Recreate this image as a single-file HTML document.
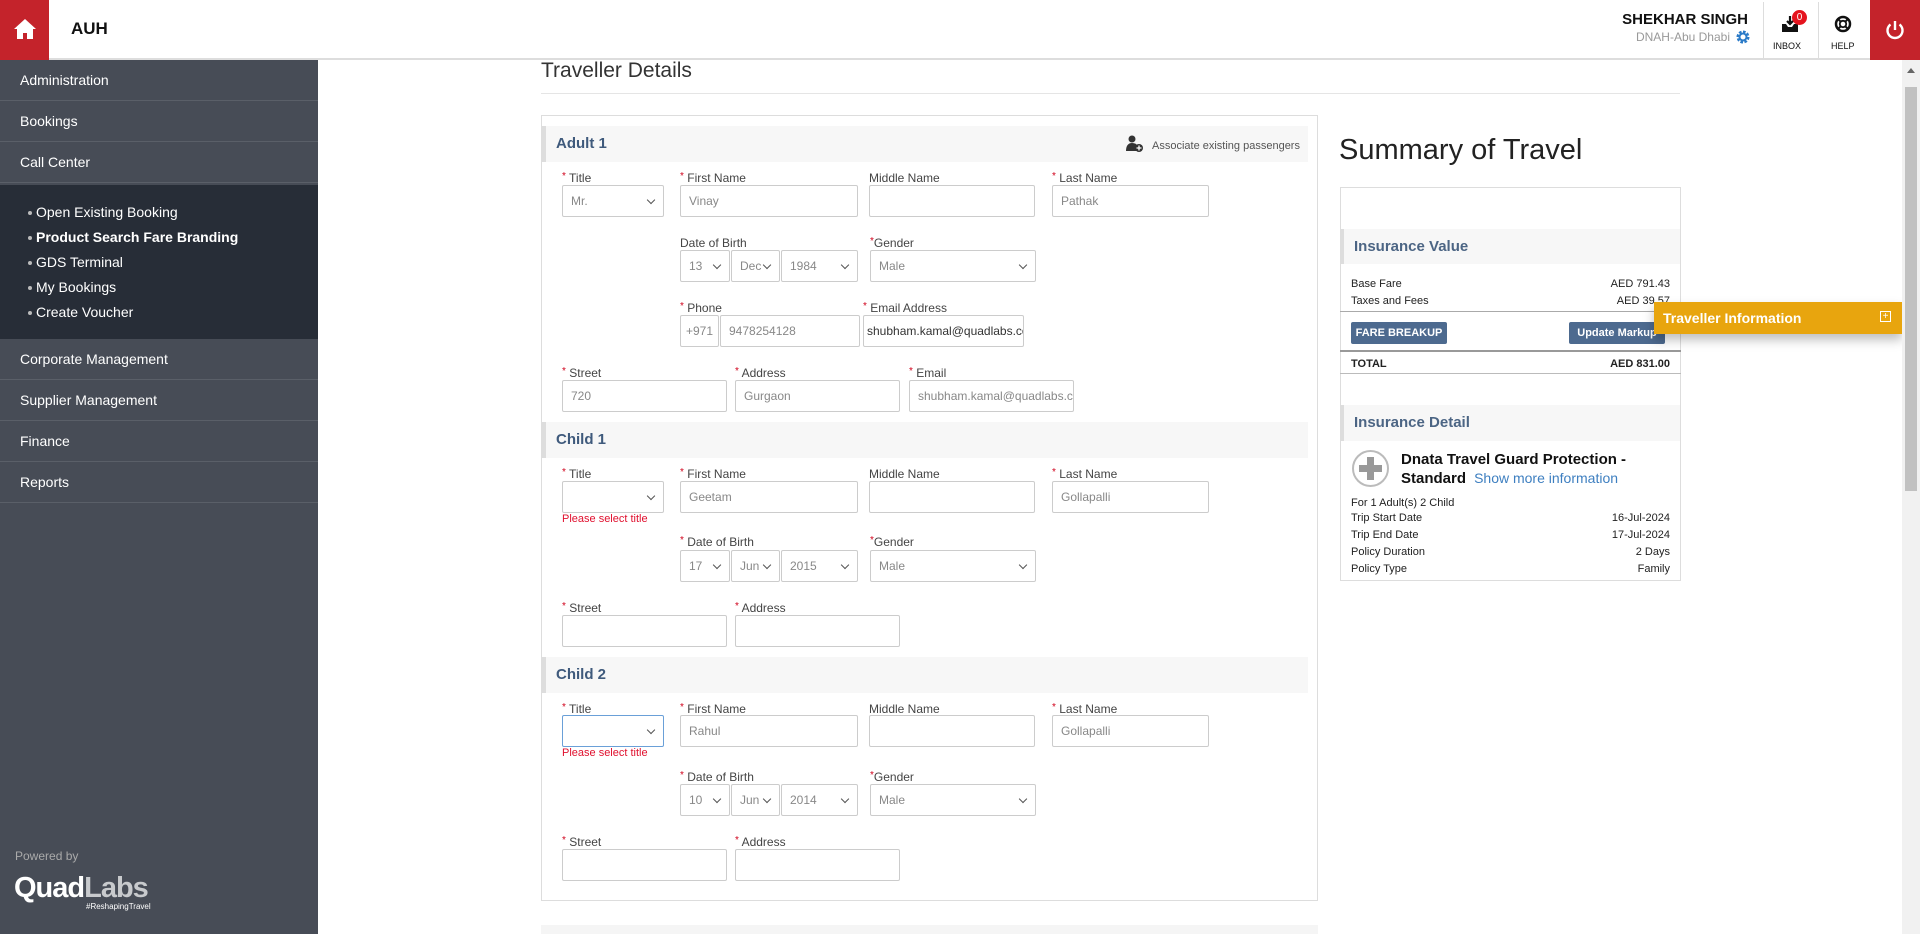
<!DOCTYPE html>
<html><head><meta charset="utf-8"><style>
*{box-sizing:border-box;margin:0;padding:0}
body{width:1920px;height:934px;overflow:hidden;font-family:"Liberation Sans",Arial,sans-serif;background:#fff;position:relative;color:#333}
.a{position:absolute}
.hdr{left:0;top:0;width:1920px;height:60px;background:#fff;border-bottom:2px solid #ddd}
.side{left:0;top:60px;width:318px;height:874px;background:#474c56}
.mi{position:absolute;left:0;width:318px;height:41px;border-bottom:1px solid #5a5f68;color:#fff;font-size:14px;line-height:41px;padding-left:20px}
.sub{position:absolute;left:0;top:125px;width:318px;height:154px;background:#272d37}
.si{position:absolute;left:24px;color:#fff;font-size:14px}
.si:before{content:"";position:absolute;left:-8px;top:7px;width:4px;height:4px;border-radius:2px;background:#bbb}
.lbl{position:absolute;font-size:12px;color:#444}
.lbl b{color:#d0021b;font-weight:normal;font-size:10px;vertical-align:top}
.in{position:absolute;height:32px;border:1px solid #ccc;border-radius:2px;background:#fff;font-size:12px;color:#888;line-height:30px;padding-left:8px;white-space:nowrap;overflow:hidden}
.sel:after{content:"";position:absolute;right:9px;top:11px;width:5px;height:5px;border-right:1.5px solid #555;border-bottom:1.5px solid #555;transform:rotate(45deg)}
.sec{position:absolute;left:542px;width:766px;height:36px;background:#f7f7f7;border-left:4px solid #ddd;font-size:15px;color:#3f5a7c;font-weight:bold;line-height:36px;padding-left:10px}
.err{position:absolute;color:#e0102e;font-size:11px}
.row{position:absolute;left:1351px;width:319px;font-size:11px;color:#222}
.row span{float:right}
.btn{position:absolute;top:322px;height:22px;background:#4d6a8f;color:#fff;font-size:11px;font-weight:bold;line-height:22px;text-align:center;border-radius:2px}
</style></head><body>
<div class="a hdr"></div>
<div class="a" style="left:0;top:0;width:49px;height:60px;background:#c4232b"></div>
<svg class="a" style="left:13px;top:18px" width="24" height="22" viewBox="0 0 24 22"><path d="M12 1L1 11h3v10h6v-6h4v6h6V11h3z" fill="#fff"/></svg>
<div class="a" style="left:71px;top:19px;font-size:17px;font-weight:bold;color:#111">AUH</div>
<div class="a" style="right:172px;top:11px;font-size:15px;font-weight:bold;color:#111">SHEKHAR SINGH</div>
<div class="a" style="right:190px;top:30px;font-size:12px;color:#999">DNAH-Abu Dhabi</div>
<svg class="a" style="left:1736px;top:30px" width="14" height="14" viewBox="0 0 14 14"><circle cx="7" cy="7" r="5" fill="none" stroke="#2b7bc8" stroke-width="3" stroke-dasharray="2.5 1.4"/><circle cx="7" cy="7" r="3.5" fill="none" stroke="#2b7bc8" stroke-width="2"/></svg>
<div class="a" style="left:1763px;top:2px;width:1px;height:58px;background:#ddd"></div>
<div class="a" style="left:1818px;top:2px;width:1px;height:58px;background:#ddd"></div>
<svg class="a" style="left:1781px;top:15px" width="18" height="18" viewBox="0 0 18 18"><path d="M1 9v8h16V9h-4l-2 3H7L5 9z" fill="#111"/><path d="M9 1v8M6 6l3 3 3-3" stroke="#111" stroke-width="2.2" fill="none"/></svg>
<div class="a" style="left:1792px;top:10px;width:15px;height:15px;border-radius:8px;background:#e5141e;color:#fff;font-size:10px;text-align:center;line-height:15px">0</div>
<div class="a" style="left:1773px;top:41px;font-size:9px;color:#111">INBOX</div>
<svg class="a" style="left:1834px;top:15px" width="18" height="18" viewBox="0 0 18 18"><circle cx="9" cy="9" r="7" fill="none" stroke="#111" stroke-width="2.5"/><circle cx="9" cy="9" r="3.2" fill="none" stroke="#111" stroke-width="1.8"/><path d="M4 4l3 3M14 4l-3 3M4 14l3-3M14 14l-3-3" stroke="#111" stroke-width="2"/></svg>
<div class="a" style="left:1831px;top:41px;font-size:9px;color:#111">HELP</div>
<div class="a" style="left:1870px;top:0;width:50px;height:60px;background:#c4232b"></div>
<svg class="a" style="left:1884px;top:19px" width="22" height="22" viewBox="0 0 22 22"><path d="M6.5 5.5a7.5 7.5 0 1 0 9 0" stroke="#fff" stroke-width="2.4" fill="none"/><path d="M11 2v9" stroke="#fff" stroke-width="2.4"/></svg>

<div class="a side">
<div class="mi" style="top:0">Administration</div>
<div class="mi" style="top:41px">Bookings</div>
<div class="mi" style="top:82px">Call Center</div>
<div class="sub">
<div class="si" style="top:19px;left:36px">Open Existing Booking</div>
<div class="si" style="top:44px;left:36px;font-weight:bold">Product Search Fare Branding</div>
<div class="si" style="top:69px;left:36px">GDS Terminal</div>
<div class="si" style="top:94px;left:36px">My Bookings</div>
<div class="si" style="top:119px;left:36px">Create Voucher</div>
</div>
<div class="mi" style="top:279px">Corporate Management</div>
<div class="mi" style="top:320px">Supplier Management</div>
<div class="mi" style="top:361px">Finance</div>
<div class="mi" style="top:402px">Reports</div>
<div class="a" style="left:15px;top:789px;font-size:12px;color:#aaa">Powered by</div>
<div class="a" style="left:14px;top:812px;font-size:29px;font-weight:bold;letter-spacing:-1px;color:#fff">Quad<span style="color:#c8cacd">Labs</span></div>
<div class="a" style="left:86px;top:842px;font-size:8px;color:#fff">#ReshapingTravel</div>
</div>

<div class="a" style="left:541px;top:59px;font-size:21px;color:#333">Traveller Details</div>
<div class="a" style="left:541px;top:93px;width:1139px;height:1px;background:#e5e5e5"></div>
<div class="a" style="left:541px;top:115px;width:777px;height:786px;border:1px solid #ddd"></div>

<div class="sec" style="top:126px">Adult 1</div>
<svg class="a" style="left:1126px;top:135px" width="18" height="18" viewBox="0 0 18 18"><circle cx="6" cy="4" r="3.5" fill="#333"/><path d="M0 16c0-5 2-8 6-8s5 2 6 3v5z" fill="#333"/><circle cx="13" cy="13" r="4" fill="#333"/><path d="M13 10.5v5M10.5 13h5" stroke="#fff" stroke-width="1.3"/></svg>
<div class="a" style="left:1152px;top:140px;font-size:11px;color:#555">Associate existing passengers</div>

<div class="lbl" style="left:562px;top:171px"><b>*</b> Title</div>
<div class="lbl" style="left:680px;top:171px"><b>*</b> First Name</div>
<div class="lbl" style="left:869px;top:171px">Middle Name</div>
<div class="lbl" style="left:1052px;top:171px"><b>*</b> Last Name</div>
<div class="in sel" style="left:562px;top:185px;width:102px">Mr.</div>
<div class="in" style="left:680px;top:185px;width:178px">Vinay</div>
<div class="in" style="left:869px;top:185px;width:166px"></div>
<div class="in" style="left:1052px;top:185px;width:157px">Pathak</div>

<div class="lbl" style="left:680px;top:236px">Date of Birth</div>
<div class="lbl" style="left:870px;top:236px"><b>*</b>Gender</div>
<div class="in sel" style="left:680px;top:250px;width:50px">13</div>
<div class="in sel" style="left:731px;top:250px;width:49px">Dec</div>
<div class="in sel" style="left:781px;top:250px;width:77px">1984</div>
<div class="in sel" style="left:870px;top:250px;width:166px">Male</div>

<div class="lbl" style="left:680px;top:301px"><b>*</b> Phone</div>
<div class="lbl" style="left:863px;top:301px"><b>*</b> Email Address</div>
<div class="in" style="left:680px;top:315px;width:39px;padding-left:5px">+971</div>
<div class="in" style="left:720px;top:315px;width:140px">9478254128</div>
<div class="in" style="left:863px;top:315px;width:161px;color:#333;padding-left:3px">shubham.kamal@quadlabs.com</div>

<div class="lbl" style="left:562px;top:366px"><b>*</b> Street</div>
<div class="lbl" style="left:735px;top:366px"><b>*</b> Address</div>
<div class="lbl" style="left:909px;top:366px"><b>*</b> Email</div>
<div class="in" style="left:562px;top:380px;width:165px">720</div>
<div class="in" style="left:735px;top:380px;width:165px">Gurgaon</div>
<div class="in" style="left:909px;top:380px;width:165px">shubham.kamal@quadlabs.com</div>

<div class="sec" style="top:422px">Child 1</div>
<div class="lbl" style="left:562px;top:467px"><b>*</b> Title</div>
<div class="lbl" style="left:680px;top:467px"><b>*</b> First Name</div>
<div class="lbl" style="left:869px;top:467px">Middle Name</div>
<div class="lbl" style="left:1052px;top:467px"><b>*</b> Last Name</div>
<div class="in sel" style="left:562px;top:481px;width:102px"></div>
<div class="in" style="left:680px;top:481px;width:178px">Geetam</div>
<div class="in" style="left:869px;top:481px;width:166px"></div>
<div class="in" style="left:1052px;top:481px;width:157px">Gollapalli</div>
<div class="err" style="left:562px;top:513px">Please select title</div>
<div class="lbl" style="left:680px;top:535px"><b>*</b> Date of Birth</div>
<div class="lbl" style="left:870px;top:535px"><b>*</b>Gender</div>
<div class="in sel" style="left:680px;top:550px;width:50px">17</div>
<div class="in sel" style="left:731px;top:550px;width:49px">Jun</div>
<div class="in sel" style="left:781px;top:550px;width:77px">2015</div>
<div class="in sel" style="left:870px;top:550px;width:166px">Male</div>
<div class="lbl" style="left:562px;top:601px"><b>*</b> Street</div>
<div class="lbl" style="left:735px;top:601px"><b>*</b> Address</div>
<div class="in" style="left:562px;top:615px;width:165px"></div>
<div class="in" style="left:735px;top:615px;width:165px"></div>

<div class="sec" style="top:657px">Child 2</div>
<div class="lbl" style="left:562px;top:702px"><b>*</b> Title</div>
<div class="lbl" style="left:680px;top:702px"><b>*</b> First Name</div>
<div class="lbl" style="left:869px;top:702px">Middle Name</div>
<div class="lbl" style="left:1052px;top:702px"><b>*</b> Last Name</div>
<div class="in sel" style="left:562px;top:715px;width:102px;border-color:#6aa0d8"></div>
<div class="in" style="left:680px;top:715px;width:178px">Rahul</div>
<div class="in" style="left:869px;top:715px;width:166px"></div>
<div class="in" style="left:1052px;top:715px;width:157px">Gollapalli</div>
<div class="err" style="left:562px;top:747px">Please select title</div>
<div class="lbl" style="left:680px;top:770px"><b>*</b> Date of Birth</div>
<div class="lbl" style="left:870px;top:770px"><b>*</b>Gender</div>
<div class="in sel" style="left:680px;top:784px;width:50px">10</div>
<div class="in sel" style="left:731px;top:784px;width:49px">Jun</div>
<div class="in sel" style="left:781px;top:784px;width:77px">2014</div>
<div class="in sel" style="left:870px;top:784px;width:166px">Male</div>
<div class="lbl" style="left:562px;top:835px"><b>*</b> Street</div>
<div class="lbl" style="left:735px;top:835px"><b>*</b> Address</div>
<div class="in" style="left:562px;top:849px;width:165px"></div>
<div class="in" style="left:735px;top:849px;width:165px"></div>
<div class="a" style="left:541px;top:925px;width:777px;height:9px;background:#f5f5f5"></div>

<div class="a" style="left:1339px;top:134px;font-size:29px;color:#222">Summary of Travel</div>
<div class="a" style="left:1340px;top:187px;width:341px;height:394px;border:1px solid #ddd"></div>
<div class="a" style="left:1341px;top:229px;width:339px;height:35px;background:#f7f7f7;border-left:3px solid #ddd;color:#4c6584;font-size:15px;font-weight:bold;line-height:35px;padding-left:10px">Insurance Value</div>
<div class="row" style="top:278px">Base Fare<span>AED 791.43</span></div>
<div class="row" style="top:295px">Taxes and Fees<span>AED 39.57</span></div>
<div class="a" style="left:1340px;top:311px;width:341px;height:1px;background:#aaa"></div>
<div class="btn" style="left:1351px;width:96px">FARE BREAKUP</div>
<div class="btn" style="left:1569px;width:96px">Update Markup</div>
<div class="a" style="left:1340px;top:350px;width:341px;height:2px;background:#999"></div>
<div class="row" style="top:358px;font-weight:bold">TOTAL<span>AED 831.00</span></div>
<div class="a" style="left:1340px;top:373px;width:341px;height:1px;background:#bbb"></div>
<div class="a" style="left:1341px;top:405px;width:339px;height:36px;background:#f7f7f7;border-left:3px solid #ddd;color:#4c6584;font-size:15px;font-weight:bold;line-height:36px;padding-left:10px">Insurance Detail</div>
<div class="a" style="left:1352px;top:450px;width:37px;height:37px;border:2px solid #bbb;border-radius:50%"></div>
<div class="a" style="left:1367px;top:457px;width:7px;height:23px;background:#999"></div>
<div class="a" style="left:1359px;top:465px;width:23px;height:7px;background:#999"></div>
<div class="a" style="left:1401px;top:450px;font-size:15px;font-weight:bold;color:#111;line-height:19px">Dnata Travel Guard Protection -<br>Standard <span style="font-weight:normal;color:#3e7fc0;font-size:14px">&nbsp;Show more information</span></div>
<div class="row" style="top:497px">For 1 Adult(s) 2 Child</div>
<div class="row" style="top:512px">Trip Start Date<span>16-Jul-2024</span></div>
<div class="row" style="top:529px">Trip End Date<span>17-Jul-2024</span></div>
<div class="row" style="top:546px">Policy Duration<span>2 Days</span></div>
<div class="row" style="top:563px">Policy Type<span>Family</span></div>

<div class="a" style="left:1654px;top:302px;width:248px;height:32px;background:#e8a50e;box-shadow:0 6px 10px rgba(0,0,0,.25);color:#fff;font-size:14px;font-weight:bold;line-height:32px;padding-left:9px">Traveller Information</div>
<div class="a" style="left:1880px;top:311px;width:11px;height:11px;border:1px solid #fff;color:#fff;font-size:10px;line-height:9px;text-align:center">+</div>

<div class="a" style="left:1902px;top:60px;width:18px;height:874px;background:#f1f1f1"></div>
<div class="a" style="left:1905px;top:87px;width:12px;height:404px;background:#c1c1c1"></div>
<div class="a" style="left:1907px;top:68px;width:0;height:0;border-left:4px solid transparent;border-right:4px solid transparent;border-bottom:5px solid #666"></div>
</body></html>
